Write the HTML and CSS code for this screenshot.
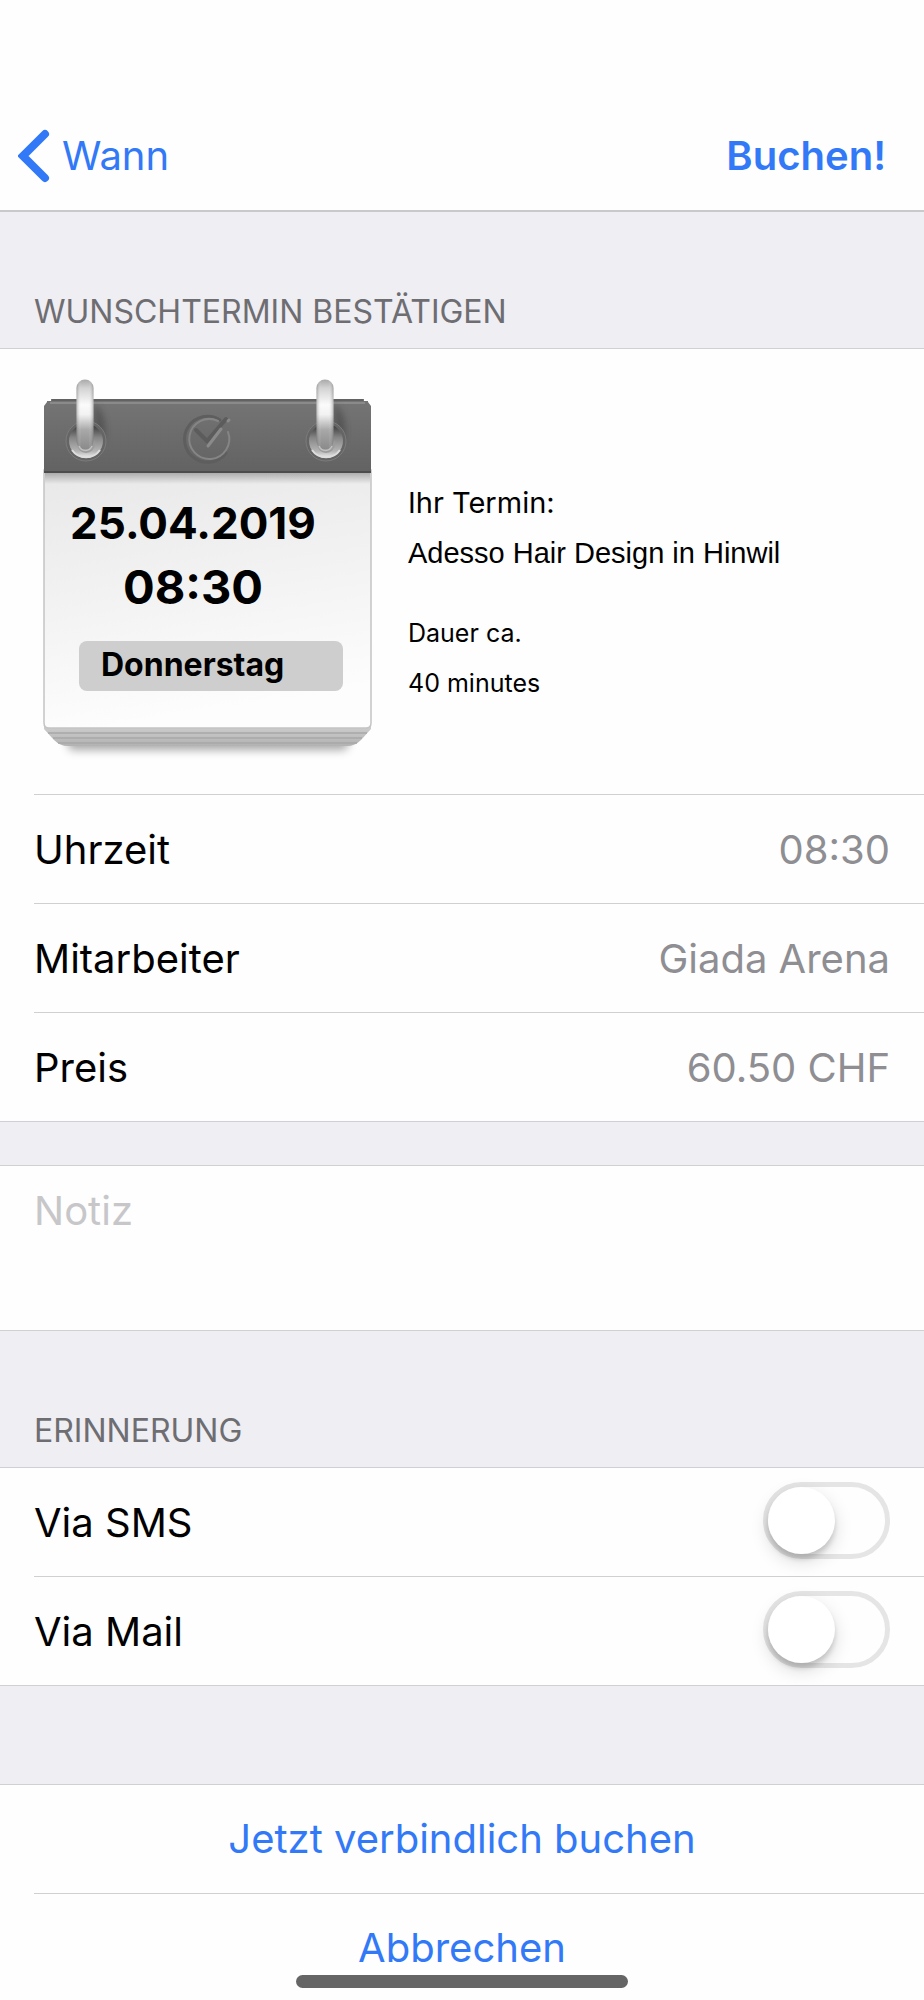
FILE: index.html
```html
<!DOCTYPE html>
<html lang="de">
<head>
<meta charset="utf-8">
<meta name="viewport" content="width=device-width, initial-scale=1">
<title>Wunschtermin bestätigen</title>
<link rel="stylesheet" href="styles.css">
</head>
<body>
<header class="navbar">
  <button class="nav-back" type="button">
    <svg class="chevron" viewBox="0 0 32 54" aria-hidden="true"><path d="M27 5 5 27l22 22" fill="none" stroke="currentColor" stroke-width="8" stroke-linecap="round" stroke-linejoin="miter"/></svg>
    <span>Wann</span>
  </button>
  <button class="nav-action" type="button">Buchen!</button>
</header>

<main>
  <h2 class="section-title">Wunschtermin bestätigen</h2>
  <section class="group">
    <div class="appointment">
      <div class="calendar">
        <svg class="calendar-art" viewBox="0 0 350 400" aria-hidden="true">
          <defs>
            <linearGradient id="head" x1="0" y1="0" x2="0" y2="1"><stop offset="0" stop-color="#757575"/><stop offset="1" stop-color="#626262"/></linearGradient>
            <linearGradient id="page" x1="0" y1="0" x2="0.2" y2="1"><stop offset="0" stop-color="#e8e8e8"/><stop offset="0.5" stop-color="#f2f2f2"/><stop offset="1" stop-color="#fdfdfd"/></linearGradient>
            <linearGradient id="fold" x1="0" y1="0" x2="0" y2="1"><stop offset="0" stop-color="#000" stop-opacity="0.26"/><stop offset="1" stop-color="#000" stop-opacity="0"/></linearGradient>
            <linearGradient id="ring" x1="0" y1="0" x2="0" y2="1"><stop offset="0" stop-color="#a9a9a9"/><stop offset="0.12" stop-color="#d2d2d2"/><stop offset="0.36" stop-color="#fbfbfb"/><stop offset="0.5" stop-color="#f2f2f2"/><stop offset="0.72" stop-color="#a8a8a8"/><stop offset="1" stop-color="#8a8a8a"/></linearGradient>
            <linearGradient id="round" x1="0" y1="0" x2="1" y2="0"><stop offset="0" stop-color="#555" stop-opacity="0.4"/><stop offset="0.28" stop-color="#fff" stop-opacity="0"/><stop offset="0.7" stop-color="#fff" stop-opacity="0"/><stop offset="1" stop-color="#555" stop-opacity="0.4"/></linearGradient>
            <linearGradient id="hole" x1="0" y1="0" x2="0" y2="1"><stop offset="0" stop-color="#333"/><stop offset="0.4" stop-color="#858585"/><stop offset="0.8" stop-color="#b5b5b5"/><stop offset="1" stop-color="#eee"/></linearGradient>
            <linearGradient id="stack" x1="0" y1="0" x2="0" y2="1"><stop offset="0" stop-color="#d6d6d6"/><stop offset="1" stop-color="#b2b2b2"/></linearGradient>
            <filter id="soft" x="-20%" y="-50%" width="140%" height="200%"><feGaussianBlur stdDeviation="5"/></filter>
            <filter id="softer" x="-60%" y="-60%" width="220%" height="220%"><feGaussianBlur stdDeviation="3"/></filter>
            <g id="binder">
              <path d="M8-38C18-30 22-16 18 0L8 4Z" fill="#333" opacity="0.4" filter="url(#softer)"/>
              <circle r="20" fill="#656565" stroke="#7c7c7c" stroke-width="1"/>
              <circle r="17" fill="url(#hole)"/>
              <path d="M-14 9A17 17 0 0 0 14 9" fill="none" stroke="#dedede" stroke-width="2"/>
              <circle cy="3" r="9" fill="#9c9c9c"/>
              <path d="M-9.500-53a8.500 8.500 0 0 1 17 0V0a8.500 8.500 0 0 1-17 0Z" fill="url(#ring)"/>
              <path d="M-9.500-53a8.500 8.500 0 0 1 17 0V0a8.500 8.500 0 0 1-17 0Z" fill="url(#round)"/>
              <path d="M-7 5a7 7 0 0 0 13 0" fill="none" stroke="#c0c0c0" stroke-width="1.500"/>
            </g>
          </defs>
          <path d="M30 360H318L312 380H36Z" fill="#000" opacity="0.34" filter="url(#soft)"/>
          <path d="M10 350H337V359L327 370Q321 376 313 376H34Q26 376 20 370L10 359Z" fill="url(#stack)"/>
          <path d="M14 363H333M19 368H328M24 373H323" stroke="#a8a8a8" stroke-width="1.500"/>
          <path d="M10 100H337V353Q337 358 332 358H15Q10 358 10 353Z" fill="url(#page)" stroke="#c4c4c4" stroke-width="1.500"/>
          <path d="M11 103H336V114H11Z" fill="url(#fold)"/>
          <path d="M10 36L13 32V31H17V29H330V31H334V32L337 36V103H10Z" fill="url(#head)"/>
          <path d="M18 30H329" stroke="#5c5c5c" stroke-width="1.500"/>
          <path d="M16 33H331" stroke="#8a8a8a" stroke-width="2"/>
          <path d="M10 102H337" stroke="#4c4c4c" stroke-width="2"/>
          <g fill="none" stroke-linecap="round">
            <path d="M186 50A23 23 0 1 0 192 83" stroke="#5e5e5e" stroke-width="3"/>
            <path d="M184 51A20 20 0 1 0 194 62" stroke="#858585" stroke-width="2"/>
            <path d="M162 60L173 71L192 49" stroke="#5c5c5c" stroke-width="4"/>
            <path d="M174 76L187 59M194 51L195 50" stroke="#8a8a8a" stroke-width="3"/>
          </g>
          <use href="#binder" x="52" y="71"/>
          <use href="#binder" x="292" y="71"/>
        </svg>
        <time class="calendar-date" datetime="2019-04-25">25.04.2019</time>
        <time class="calendar-time">08:30</time>
        <span class="calendar-day">Donnerstag</span>
      </div>
      <div class="summary">
        <p class="summary-main">Ihr Termin:</p>
        <p class="summary-main summary-salon">Adesso Hair Design in Hinwil</p>
        <p class="summary-sub summary-duration">Dauer ca.</p>
        <p class="summary-sub">40 minutes</p>
      </div>
    </div>
    <dl class="details">
      <div class="row"><dt>Uhrzeit</dt><dd>08:30</dd></div>
      <div class="row"><dt>Mitarbeiter</dt><dd>Giada Arena</dd></div>
      <div class="row"><dt>Preis</dt><dd>60.50 CHF</dd></div>
    </dl>
  </section>

  <section class="group group-note">
    <textarea class="note" placeholder="Notiz" aria-label="Notiz"></textarea>
  </section>

  <h2 class="section-title">Erinnerung</h2>
  <section class="group">
    <div class="row"><label for="sms">Via SMS</label><input class="switch" id="sms" type="checkbox" role="switch"></div>
    <div class="row"><label for="mail">Via Mail</label><input class="switch" id="mail" type="checkbox" role="switch"></div>
  </section>

  <section class="group group-actions">
    <button class="action" type="button">Jetzt verbindlich buchen</button>
    <button class="action action-last" type="button">Abbrechen</button>
  </section>
</main>
<div class="home-indicator"></div>
</body>
</html>
```

FILE: styles.css
```css
:root {
  --blue: #3279f7;
  --line: #d0d0d4;
  --inset: 34px;
}

* {
  box-sizing: border-box;
}

body {
  margin: 0;
  background: #efeef3;
  color: #000;
  font: 40px/48px Inter, "Liberation Sans", sans-serif;
}

button,
textarea {
  font: inherit;
  border: 0;
  background: none;
}

p,
dl,
dd {
  margin: 0;
}

.navbar {
  display: flex;
  justify-content: space-between;
  align-items: center;
  padding: 103px 38px 1px 18px;
  background: #fefefe;
  height: 212px;
  border-bottom: 2px solid #c9c9cb;
}

.nav-back,
.nav-action {
  display: flex;
  align-items: center;
  padding: 0;
  color: var(--blue);
}

.nav-back {
  gap: 12px;
}

.nav-action {
  font-weight: 600;
}

.chevron {
  width: 32px;
  height: 54px;
}

.section-title {
  margin: 0;
  padding: 80px var(--inset) 16px;
  color: #6d6d72;
  font-size: 32px;
  font-weight: 400;
  line-height: 40px;
  text-transform: uppercase;
}

.group {
  background: #fefefe;
  border-top: 1px solid var(--line);
  border-bottom: 1px solid var(--line);
}

.appointment {
  display: flex;
  gap: 24px;
  padding: 21px var(--inset) 24px;
}

.calendar {
  position: relative;
  display: flex;
  flex: none;
  flex-direction: column;
  align-items: center;
  width: 350px;
  height: 400px;
  padding: 121px 32px 0 0;
  font-weight: 700;
}

.calendar > * {
  position: relative;
}

.calendar > .calendar-art {
  position: absolute;
  inset: 0;
}

.calendar-date {
  font-size: 44px;
  line-height: 64px;
}

.calendar-time {
  font-size: 47px;
  line-height: 64px;
}

.calendar-day {
  width: 264px;
  margin: 22px 0 0 36px;
  padding: 0 22px 2px;
  border-radius: 8px;
  background: #cecece;
  font-size: 32px;
  line-height: 48px;
}

.summary {
  padding-top: 108px;
  line-height: 50px;
}

.summary-main {
  font-size: 29px;
}

.summary-salon {
  font-family: "Liberation Sans", Arial, sans-serif;
}

.summary-sub {
  font-size: 25px;
}

.summary-duration {
  margin-top: 30px;
}

.row {
  display: flex;
  justify-content: space-between;
  align-items: center;
  height: 109px;
  margin-left: var(--inset);
  padding: 2px var(--inset) 0 0;
  border-top: 1px solid var(--line);
}

.group > .row:first-child {
  height: 108px;
  border-top: 0;
}

.row dd {
  color: #8e8e93;
}

.group-note {
  margin-top: 43px;
}

.note {
  display: block;
  width: 100%;
  height: 164px;
  padding: 21px var(--inset);
  resize: none;
  outline: 0;
}

.note::placeholder {
  color: #c7c7c9;
  opacity: 1;
}

.switch {
  appearance: none;
  width: 127px;
  height: 77px;
  margin: 0 0 6px;
  border: 5px solid #e5e5e5;
  border-radius: 39px;
}

.switch::before {
  content: "";
  display: block;
  width: 67px;
  height: 67px;
  border-radius: 50%;
  background: #fff;
  box-shadow: 0 7px 18px rgba(0, 0, 0, 0.15), 0 5px 5px rgba(0, 0, 0, 0.14);
}

.group-actions {
  margin-top: 98px;
  border-bottom: 0;
}

.action {
  display: block;
  width: 100%;
  padding: 30px var(--inset);
  color: var(--blue);
  text-align: center;
}

.action-last {
  position: relative;
  padding: 31px var(--inset) 28px;
}

.action-last::before {
  content: "";
  position: absolute;
  top: 0;
  left: var(--inset);
  right: 0;
  border-top: 1px solid var(--line);
}

.home-indicator {
  position: fixed;
  bottom: 12px;
  left: 50%;
  width: 332px;
  height: 13px;
  margin-left: -166px;
  border-radius: 7px;
  background: #656565;
}
```
